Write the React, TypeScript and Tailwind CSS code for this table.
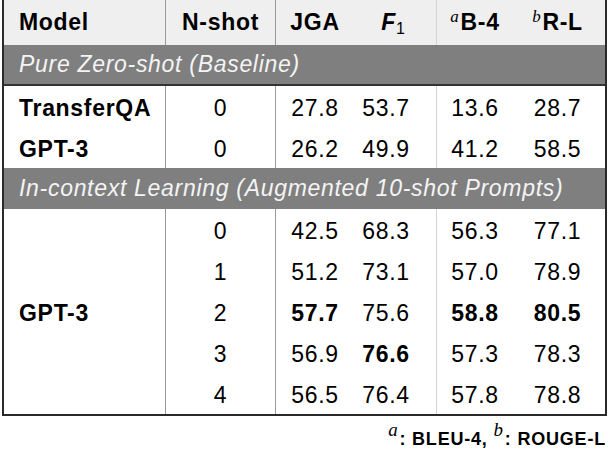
import React from "react";

type Cell = { t: React.ReactNode; b?: boolean };

const W = ["w-[162px]", "w-[110px]", "w-[74px]", "w-[87px]", "w-[75px]", "w-[93px]"];
const BR = [
  "border-r border-[#9a9a9a]",
  "border-r border-[#9a9a9a]",
  "",
  "border-r border-[#d4d4d4]",
  "",
  "",
];
const PAD = ["pl-[15px] text-left", "text-center", "text-center pl-[4px]", "text-center pr-[14px]", "text-center pl-[1px]", "text-center pr-[2px]"];

function Row({ cells, h, pt = "" }: { cells: Cell[]; h: string; pt?: string }) {
  return (
    <div className={`flex ${h}`}>
      {cells.map((c, i) => (
        <div
          key={i}
          className={`${W[i]} ${BR[i]} ${PAD[i]} ${pt} flex items-center ${i === 0 ? "justify-start" : "justify-center"} ${c.b ? "font-bold" : ""}`}
        >
          <span>{c.t}</span>
        </div>
      ))}
    </div>
  );
}

const sup = (s: string, cls = "text-[17px]") => (
  <sup className={`italic font-normal ${cls} top-[-0.5em] mr-[1px]`} style={{ fontFamily: '"Liberation Serif", serif' }}>
    {s}
  </sup>
);

export default function App() {
  const data = [
    ["0", "42.5", "68.3", "56.3", "77.1"],
    ["1", "51.2", "73.1", "57.0", "78.9"],
    ["2", "57.7", "75.6", "58.8", "80.5"],
    ["3", "56.9", "76.6", "57.3", "78.3"],
    ["4", "56.5", "76.4", "57.8", "78.8"],
  ];
  const bold: Record<string, boolean> = { "2-1": true, "2-3": true, "2-4": true, "3-2": true };
  return (
    <div
      className="w-[608px] h-[474px] bg-white text-black text-[23px] tracking-[0.7px]"
      style={{ fontFamily: '"Liberation Sans", Arial, sans-serif' }}
    >
      <div className="ml-[2px] w-[605px] border-x-2 border-b-2 border-[#2a2a2a]">
        <div className="bg-[#efefef]">
          <Row
            h="h-[45px]"
            cells={[
              { t: "Model", b: true },
              { t: "N-shot", b: true },
              { t: "JGA", b: true },
              {
                t: (
                  <span className="pl-[15px]">
                    <span className="italic">F</span>
                    <sub className="font-normal text-[16px] not-italic">1</sub>
                  </span>
                ),
                b: true,
              },
              { t: <>{sup("a")}B-4</>, b: true },
              { t: <>{sup("b")}R-L</>, b: true },
            ]}
          />
        </div>
        <div className="h-[41px] bg-[#7f7f7f] text-[#f4f4f4] italic flex items-center pl-[15px] border-b-2 border-[#333]">
          Pure Zero-shot (Baseline)
        </div>
        <Row
          h="h-[41px]"
          pt="pt-[3px]"
          cells={[
            { t: "TransferQA", b: true },
            { t: "0" },
            { t: "27.8" },
            { t: "53.7" },
            { t: "13.6" },
            { t: "28.7" },
          ]}
        />
        <Row
          h="h-[41px]"
          pt="pt-[3px]"
          cells={[
            { t: "GPT-3", b: true },
            { t: "0" },
            { t: "26.2" },
            { t: "49.9" },
            { t: "41.2" },
            { t: "58.5" },
          ]}
        />
        <div className="h-[41px] bg-[#7f7f7f] text-[#f4f4f4] italic flex items-center pl-[15px]">
          In-context Learning (Augmented 10-shot Prompts)
        </div>
        <div className="flex">
          <div className={`${W[0]} ${BR[0]} pl-[15px] flex items-center font-bold pt-[4px]`}>GPT-3</div>
          <div className="flex flex-col">
            {data.map((r, ri) => (
              <div key={ri} className="flex h-[41px]">
                {r.map((v, ci) => (
                  <div
                    key={ci}
                    className={`${W[ci + 1]} ${BR[ci + 1]} ${PAD[ci + 1]} pt-[3px] flex items-center justify-center ${bold[`${ri}-${ci}`] ? "font-bold" : ""}`}
                  >
                    {v}
                  </div>
                ))}
              </div>
            ))}
          </div>
        </div>
      </div>
      <div className="flex justify-end pr-[2px] mt-[10px] text-[18px] font-bold tracking-[0.8px]">
        <span>
          {sup("a", "text-[19px]")}: BLEU-4, {sup("b", "text-[19px]")}: ROUGE-L
        </span>
      </div>
    </div>
  );
}
